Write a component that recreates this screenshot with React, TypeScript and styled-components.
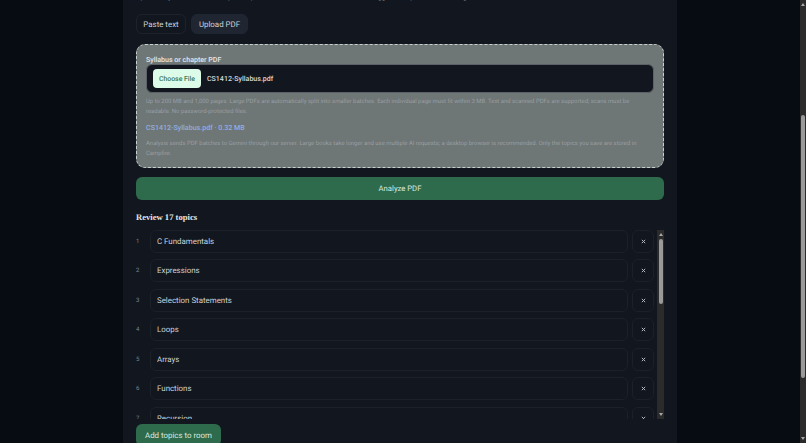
import { useLayoutEffect, useRef } from "react";
import styled, { createGlobalStyle } from "styled-components";

const GlobalStyle = createGlobalStyle`
  html, body {
    height: 100%;
    margin: 0;
    overflow: hidden;
    background: #070b12;
  }
  body {
    font-family: "Roboto", "Liberation Sans", sans-serif;
    color: #d5d9de;
    text-rendering: geometricPrecision;
  }
  input, button {
    text-rendering: inherit;
  }
  #root {
    height: 100%;
  }
`;

const Shell = styled.div`
  display: flex;
  height: 100%;
`;

const Scroller = styled.div`
  flex: 1;
  min-width: 0;
  overflow: hidden;
`;

const Rail = styled.div<{ $width: number }>`
  flex: none;
  display: flex;
  flex-direction: column;
  align-items: center;
  width: ${({ $width }) => $width}px;
  background: #2b2b2b;
`;

const RailTrack = styled.div`
  flex: 1;
  align-self: stretch;
  display: flex;
  justify-content: center;
`;

const RailThumb = styled.div<{ $top: number; $height: number }>`
  width: 4px;
  height: ${({ $height }) => $height}px;
  margin-top: ${({ $top }) => $top}px;
  border-radius: 2px;
  background: #9a9a9a;
`;

const RailArrow = styled.div<{ $down?: boolean }>`
  flex: none;
  width: 0;
  height: 0;
  margin: 3px 0;
  border-left: 2.5px solid transparent;
  border-right: 2.5px solid transparent;
  ${({ $down }) =>
    $down ? "border-top: 3px solid #a8a8a8;" : "border-bottom: 3px solid #a8a8a8;"}
`;

const Panel = styled.main`
  box-sizing: border-box;
  width: 554px;
  min-height: 726px;
  margin: 0 auto;
  padding: 134px 13px 64px;
  background: #12171f;
`;

const Heading = styled.h1`
  margin: 0 0 24px;
  font-family: "Liberation Serif", serif;
  font-size: 16px;
  font-weight: 700;
  color: #e6e9ec;
`;

const Intro = styled.p`
  margin: 0 0 12px;
  font-size: 6.86px;
  line-height: 10px;
  color: #9aa1a8;
`;

const Tabs = styled.div`
  display: flex;
  gap: 5px;
  margin-bottom: 10px;
`;

const Tab = styled.button<{ $active?: boolean; $width: number }>`
  width: ${({ $width }) => $width}px;
  height: 20px;
  padding: 0;
  border: 1px solid ${({ $active }) => ($active ? "#1f2632" : "#1d232c")};
  border-radius: 6px;
  background: ${({ $active }) => ($active ? "#1f2632" : "#12171f")};
  color: #cdd2d8;
  font: 400 7.9px "Roboto", "Liberation Sans", sans-serif;
`;

const DropZone = styled.section`
  box-sizing: border-box;
  height: 124px;
  padding: 10px 9px 0;
  border: 1px dashed #c6d0cc;
  border-radius: 9px;
  background: #6f7676;
`;

const FieldLabel = styled.div`
  font-size: 7.05px;
  line-height: 9px;
  font-weight: 500;
  color: #e4e7e9;
`;

const FileBox = styled.div`
  box-sizing: border-box;
  display: flex;
  align-items: center;
  gap: 6px;
  height: 29px;
  padding: 0 6px;
  margin-bottom: 4px;
  border: 1px solid #5b6166;
  border-radius: 6px;
  background: #12171f;
`;

const ChooseFile = styled.button`
  height: 19px;
  width: 48px;
  padding: 0;
  border: 0;
  border-radius: 4px;
  background: #dcfbe8;
  color: #3f7a5a;
  font: 500 6.9px "Roboto", "Liberation Sans", sans-serif;
`;

const FileName = styled.span`
  font-size: 7.05px;
  font-weight: 500;
  color: #d5d9de;
`;

const Help = styled.p`
  margin: 0;
  font-size: 5.93px;
  line-height: 10px;
  color: #989fa3;
`;

const Selected = styled.div`
  margin: 6px 0 5.5px;
  font-size: 7.1px;
  line-height: 10px;
  font-weight: 500;
  color: #90aee0;
`;

const Analyze = styled.button`
  display: block;
  width: 100%;
  height: 23px;
  margin-top: 9px;
  border: 0;
  border-radius: 6px;
  background: #2e6b4d;
  color: #dbe8df;
  font: 400 7.7px "Roboto", "Liberation Sans", sans-serif;
`;

const ReviewTitle = styled.h2`
  margin: 12px 0 6.5px;
  font-family: "Liberation Serif", serif;
  font-size: 8.6px;
  line-height: 11px;
  font-weight: 700;
  color: #e6e9ec;
`;

const TopicArea = styled.div`
  display: flex;
  height: 189.5px;
`;

const TopicList = styled.div`
  flex: 1;
  min-width: 0;
  display: flex;
  flex-direction: column;
  gap: 6.5px;
  overflow: hidden;
`;

const TopicRow = styled.div`
  display: grid;
  grid-template-columns: 10px 1fr 22px;
  column-gap: 4px;
  align-items: center;
  flex: none;
  height: 23px;
  margin-right: 3px;
`;

const TopicNumber = styled.span`
  font-size: 6px;
  color: #7b8289;
`;

const TopicInput = styled.input`
  box-sizing: border-box;
  width: 100%;
  height: 23px;
  padding: 0 6px;
  border: 1px solid #1b2129;
  border-radius: 6px;
  background: #12171f;
  color: #cdd2d8;
  font: 400 7.9px "Roboto", "Liberation Sans", sans-serif;
  outline: none;
`;

const RemoveTopic = styled.button`
  display: flex;
  align-items: center;
  justify-content: center;
  height: 23px;
  padding: 0;
  border: 1px solid #1b2129;
  border-radius: 6px;
  background: transparent;
  color: #b4b9be;
`;

const AddTopics = styled.button`
  display: block;
  height: 22px;
  width: 85px;
  margin-top: 5px;
  border: 0;
  border-radius: 6px;
  background: #2e6b4d;
  color: #dbe8df;
  font: 400 7.9px "Roboto", "Liberation Sans", sans-serif;
`;

const topics = [
  "C Fundamentals",
  "Expressions",
  "Selection Statements",
  "Loops",
  "Arrays",
  "Functions",
  "Recursion",
  "Pointers",
  "Pointers and Arrays",
  "Strings",
  "Structures",
  "Unions and Enumerations",
  "Dynamic Memory",
  "Linked Lists",
  "File Input and Output",
  "The Preprocessor",
  "Bit Operations",
];

export default function App() {
  const scroller = useRef<HTMLDivElement>(null);

  useLayoutEffect(() => {
    if (scroller.current) scroller.current.scrollTop = 184;
  }, []);

  return (
    <Shell>
      <GlobalStyle />
      <Scroller ref={scroller}>
        <Panel>
          <Heading>Import topics</Heading>
          <Intro>
            Upload a syllabus or short chapter, or paste its table. Review and edit the AI&apos;s suggested topics before adding them.
          </Intro>
          <Tabs>
            <Tab $width={50}>Paste text</Tab>
            <Tab $active $width={57}>Upload PDF</Tab>
          </Tabs>
          <DropZone>
            <FieldLabel>Syllabus or chapter PDF</FieldLabel>
            <FileBox>
              <ChooseFile>Choose File</ChooseFile>
              <FileName>CS1412-Syllabus.pdf</FileName>
            </FileBox>
            <Help>
              Up to 200 MB and 1,000 pages. Large PDFs are automatically split into smaller batches. Each individual page must fit within 3 MB. Text and scanned PDFs are supported; scans must be readable. No password-protected files.
            </Help>
            <Selected>CS1412-Syllabus.pdf · 0.32 MB</Selected>
            <Help>
              Analysis sends PDF batches to Gemini through our server. Large books take longer and use multiple AI requests; a desktop browser is recommended. Only the topics you save are stored in Campfire.
            </Help>
          </DropZone>
          <Analyze>Analyze PDF</Analyze>
          <ReviewTitle>Review 17 topics</ReviewTitle>
          <TopicArea>
            <TopicList>
              {topics.map((topic, index) => (
                <TopicRow key={topic}>
                  <TopicNumber>{index + 1}</TopicNumber>
                  <TopicInput defaultValue={topic} />
                  <RemoveTopic aria-label={`Remove ${topic}`}>
                    <svg width="5" height="5" viewBox="0 0 6 6">
                      <path d="M1 1l4 4M5 1L1 5" stroke="currentColor" strokeWidth="1.2" />
                    </svg>
                  </RemoveTopic>
                </TopicRow>
              ))}
            </TopicList>
            <Rail $width={7}>
              <RailArrow />
              <RailTrack>
                <RailThumb $top={0} $height={65} />
              </RailTrack>
              <RailArrow $down />
            </Rail>
          </TopicArea>
          <AddTopics>Add topics to room</AddTopics>
        </Panel>
      </Scroller>
      <Rail $width={6}>
        <RailArrow />
        <RailTrack>
          <RailThumb $top={106} $height={263} />
        </RailTrack>
        <RailArrow $down />
      </Rail>
    </Shell>
  );
}
